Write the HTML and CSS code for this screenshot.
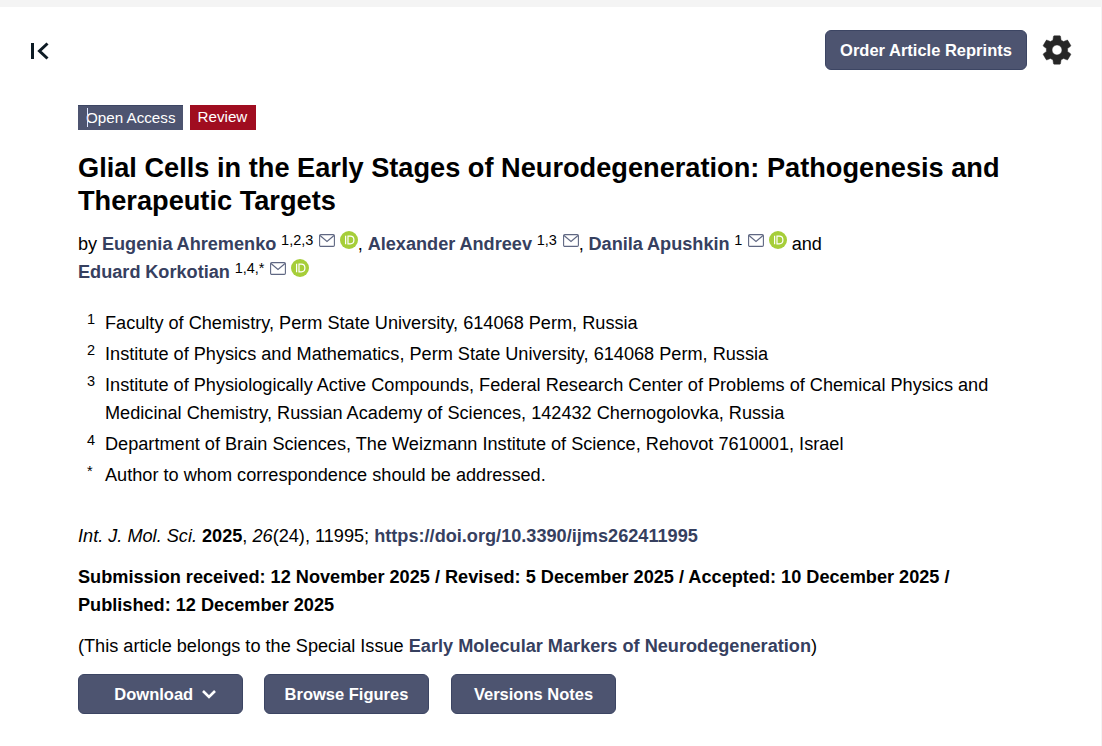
FILE: index.html
```html
<!DOCTYPE html>
<html lang="en">
<head>
<meta charset="utf-8">
<title>Glial Cells in the Early Stages of Neurodegeneration</title>
<link rel="stylesheet" href="styles.css">
</head>
<body>
<div class="strip"></div>
<header class="toolbar">
  <svg class="collapse" width="20" height="18" viewBox="0 0 20 18" aria-hidden="true"><path d="M2.5 1v16" fill="none" stroke="#0d1b24" stroke-width="3"/><path d="M17.5 1.5 9.5 9l8 7.5" fill="none" stroke="#0d1b24" stroke-width="3"/></svg>
  <div class="toolbar-right">
    <a class="btn btn-order">Order Article Reprints</a>
    <svg class="gear" width="34" height="34" viewBox="0 0 24 24" aria-hidden="true"><path fill="#262626" stroke="#262626" stroke-width=".35" d="M19.43 12.98c.04-.32.07-.64.07-.98s-.03-.66-.07-.98l2.11-1.65c.19-.15.24-.42.12-.64l-2-3.46c-.12-.22-.39-.3-.61-.22l-2.49 1c-.52-.4-1.08-.73-1.69-.98l-.38-2.65A.488.488 0 0 0 14 2h-4c-.25 0-.46.18-.49.42l-.38 2.65c-.61.25-1.17.59-1.69.98l-2.49-1c-.23-.09-.49 0-.61.22l-2 3.46c-.13.22-.07.49.12.64l2.11 1.65c-.04.32-.07.65-.07.98s.03.66.07.98l-2.11 1.65c-.19.15-.24.42-.12.64l2 3.46c.12.22.39.3.61.22l2.49-1c.52.4 1.08.73 1.69.98l.38 2.65c.03.24.24.42.49.42h4c.25 0 .46-.18.49-.42l.38-2.65c.61-.25 1.17-.59 1.69-.98l2.49 1c.23.09.49 0 .61-.22l2-3.46c.12-.22.07-.49-.12-.64l-2.11-1.65zM12 15.5c-1.93 0-3.5-1.57-3.5-3.5s1.57-3.5 3.5-3.5 3.5 1.57 3.5 3.5-1.57 3.5-3.5 3.5z"/></svg>
  </div>
</header>
<main class="article">
  <div class="tags">
    <span class="tag tag-access"><i class="caret"></i>Open Access</span>
    <span class="tag tag-review">Review</span>
  </div>
  <h1 class="title">Glial Cells in the Early Stages of Neurodegeneration: Pathogenesis and Therapeutic Targets</h1>
  <div class="authors">
    <div class="author-line">by <a class="link">Eugenia Ahremenko</a> <sup class="sup">1,2,3</sup> <svg class="mail" viewBox="0 0 16 13" aria-hidden="true"><rect x=".6" y=".6" width="14.8" height="11.8" rx="1.2"/><path d="M1 1.5 8 7.5l7-6"/></svg> <svg class="orcid" viewBox="0 0 18 18" aria-hidden="true"><circle cx="9" cy="9" r="9" fill="#a6ce39"/><path d="M5.6 4.8v8.4" stroke="#fff" stroke-width="1.2"/><path d="M8 5.2h2.3c2.3 0 3.6 1.5 3.6 3.8s-1.3 3.8-3.6 3.8H8z" fill="none" stroke="#fff" stroke-width="1.2"/></svg>, <a class="link">Alexander Andreev</a> <sup class="sup">1,3</sup> <svg class="mail" viewBox="0 0 16 13" aria-hidden="true"><rect x=".6" y=".6" width="14.8" height="11.8" rx="1.2"/><path d="M1 1.5 8 7.5l7-6"/></svg>, <a class="link">Danila Apushkin</a> <sup class="sup">1</sup> <svg class="mail" viewBox="0 0 16 13" aria-hidden="true"><rect x=".6" y=".6" width="14.8" height="11.8" rx="1.2"/><path d="M1 1.5 8 7.5l7-6"/></svg> <svg class="orcid" viewBox="0 0 18 18" aria-hidden="true"><circle cx="9" cy="9" r="9" fill="#a6ce39"/><path d="M5.6 4.8v8.4" stroke="#fff" stroke-width="1.2"/><path d="M8 5.2h2.3c2.3 0 3.6 1.5 3.6 3.8s-1.3 3.8-3.6 3.8H8z" fill="none" stroke="#fff" stroke-width="1.2"/></svg> and</div>
    <div class="author-line"><a class="link">Eduard Korkotian</a> <sup class="sup">1,4,*</sup> <svg class="mail" viewBox="0 0 16 13" aria-hidden="true"><rect x=".6" y=".6" width="14.8" height="11.8" rx="1.2"/><path d="M1 1.5 8 7.5l7-6"/></svg> <svg class="orcid" viewBox="0 0 18 18" aria-hidden="true"><circle cx="9" cy="9" r="9" fill="#a6ce39"/><path d="M5.6 4.8v8.4" stroke="#fff" stroke-width="1.2"/><path d="M8 5.2h2.3c2.3 0 3.6 1.5 3.6 3.8s-1.3 3.8-3.6 3.8H8z" fill="none" stroke="#fff" stroke-width="1.2"/></svg></div>
  </div>
  <ul class="affiliations">
    <li class="aff"><sup class="aff-num">1</sup><span>Faculty of Chemistry, Perm State University, 614068 Perm, Russia</span></li>
    <li class="aff"><sup class="aff-num">2</sup><span>Institute of Physics and Mathematics, Perm State University, 614068 Perm, Russia</span></li>
    <li class="aff"><sup class="aff-num">3</sup><span>Institute of Physiologically Active Compounds, Federal Research Center of Problems of Chemical Physics and Medicinal Chemistry, Russian Academy of Sciences, 142432 Chernogolovka, Russia</span></li>
    <li class="aff"><sup class="aff-num">4</sup><span>Department of Brain Sciences, The Weizmann Institute of Science, Rehovot 7610001, Israel</span></li>
    <li class="aff"><sup class="aff-num">*</sup><span>Author to whom correspondence should be addressed.</span></li>
  </ul>
  <p class="citation"><em>Int. J. Mol. Sci.</em> <b>2025</b>, <em>26</em>(24), 11995; <a class="link">https://doi.org/10.3390/ijms262411995</a></p>
  <p class="dates"><b>Submission received: 12 November 2025 / Revised: 5 December 2025 / Accepted: 10 December 2025 / Published: 12 December 2025</b></p>
  <p class="issue">(This article belongs to the Special Issue <a class="link">Early Molecular Markers of Neurodegeneration</a>)</p>
  <div class="actions">
    <a class="btn btn-download">Download <svg class="chev" width="16" height="10" viewBox="0 0 16 10" aria-hidden="true"><path d="M2 2l6 6 6-6" fill="none" stroke="#fff" stroke-width="2.6"/></svg></a>
    <a class="btn btn-act">Browse Figures</a>
    <a class="btn btn-act btn-last">Versions Notes</a>
  </div>
</main>
</body>
</html>
```
FILE: styles.css
```css
* { box-sizing: border-box; }
html, body { margin: 0; padding: 0; }
body {
  width: 1102px;
  height: 746px;
  overflow: hidden;
  background: #fff;
  border-right: 1px solid #f4f4f4;
  color: #000;
  font-family: "Liberation Sans", Arial, sans-serif;
  font-size: 18.15px;
}
.strip { height: 7px; background: #f4f4f4; }
.toolbar {
  display: flex;
  align-items: center;
  justify-content: space-between;
  padding: 23px 27px 0 30px;
  height: 63px;
}
.collapse { display: block; margin-top: 2px; }
.toolbar-right { display: flex; align-items: center; gap: 13px; }
.gear { display: block; }
.btn {
  display: inline-flex;
  align-items: center;
  justify-content: center;
  height: 40px;
  background: #4d5470;
  border: 1px solid #3c4563;
  border-radius: 6px;
  color: #fff;
  font-weight: 700;
  font-size: 16.5px;
}
.btn-order { width: 202px; }
.article { padding: 35px 78px 0; }
.tags { display: flex; gap: 7px; }
.tag {
  position: relative;
  height: 25px;
  line-height: 24px;
  padding: 0 8px;
  color: #fff;
  font-size: 15.2px;
}
.caret { position: absolute; left: 9px; top: 2px; width: 1px; height: 19px; background: #dfe6ff; }
.tag-access { padding-right: 7px; background: #4d5470; border-top: 1px solid #3c4563; }
.tag-review { padding-right: 9px; background: #a00d20; }
.title {
  margin: 21px 0 0;
  font-size: 27.2px;
  line-height: 33px;
  font-weight: 700;
}
.authors { margin-top: 13px; line-height: 28px; word-spacing: -0.3px; }
.author-line { height: 28px; white-space: nowrap; }
.link { color: #36405f; font-weight: 700; }
.sup { font-size: 14.5px; vertical-align: 5px; line-height: 0; }
.mail { width: 16px; height: 13px; fill: none; stroke: #5f6782; stroke-width: 1.1; vertical-align: 3px; margin-left: 1px; }
.orcid { width: 18px; height: 18px; vertical-align: 1px; }
.affiliations { list-style: none; margin: 23px 0 0; padding: 0; }
.aff { display: flex; line-height: 28px; margin-bottom: 3px; }
.aff-num { flex: 0 0 27px; padding-left: 9px; font-size: 14.5px; line-height: 20px; vertical-align: baseline; }
.citation { margin: 33px 0 0; line-height: 28px; }
.dates { margin: 13px 0 0; line-height: 28px; }
.issue { margin: 13px 0 0; line-height: 28px; }
.actions { display: flex; gap: 21px; margin-top: 14px; }
.btn-download { width: 165px; gap: 7.5px; padding-left: 10px; }
.btn-act { width: 165px; }
.btn-last { margin-left: 1px; }
.chev { display: block; }
```
